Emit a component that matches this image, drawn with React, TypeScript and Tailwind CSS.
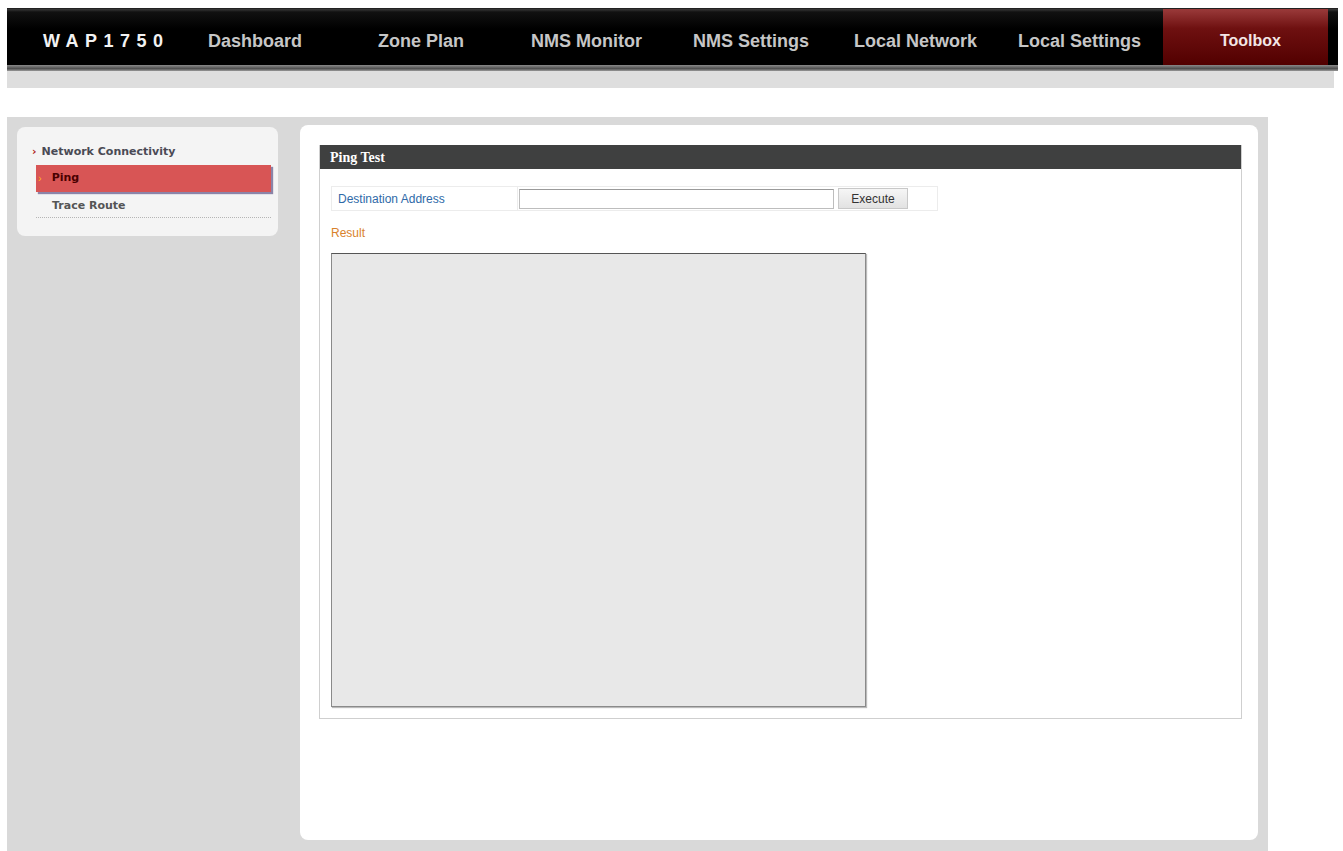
import React from "react";

const navItems = [
  { label: "Dashboard", w: "w-[170px]" },
  { label: "Zone Plan", w: "w-[153px]" },
  { label: "NMS Monitor", w: "w-[162px]" },
  { label: "NMS Settings", w: "w-[161px]" },
  { label: "Local Network", w: "w-[164px]" },
  { label: "Local Settings", w: "w-[145px]" },
];

export default function App() {
  return (
    <div className="min-h-[851px] w-[1343px] bg-white font-['Liberation_Sans',Arial,sans-serif] overflow-hidden">
      {/* Top navigation */}
      <div className="pt-[8px] pl-[7px] w-[1338px]">
        <div className="h-[57px] flex items-stretch bg-[linear-gradient(to_bottom,#3a3a3a_0px,#111_3px,#000_20px,#000_100%)] border-t border-[#222]">
          <div className="w-[201px] flex items-center pl-[36px] pt-[8px]">
            <span className="text-[#f2f2f2] font-bold text-[18px] tracking-[6.5px] leading-none">WAP1750</span>
          </div>
          <div className="flex items-stretch">
            {navItems.map((n) => (
              <div key={n.label} className={`${n.w} flex items-center pt-[8px]`}>
                <span className="text-[#c6c6c6] font-bold text-[18px] leading-none">{n.label}</span>
              </div>
            ))}
          </div>
          <div className="w-[165px] flex items-center justify-center pt-[8px] pl-[10px] bg-[linear-gradient(to_bottom,#9a3a3a_0%,#6e1010_35%,#520000_100%)]">
            <span className="text-[#f3e6e6] font-bold text-[16px] leading-none">Toolbox</span>
          </div>
        </div>
        <div className="h-[6px] bg-[linear-gradient(to_bottom,#8a8a8a,#505050_60%,#999)]" />
        <div className="h-[17px] w-[1327px] bg-[#dedede]" />
      </div>

      {/* Main */}
      <div className="mt-[29px] ml-[7px] w-[1261px] bg-[#d9d9d9] h-[734px] flex pt-[8px] pl-[10px] pr-[10px]">
        {/* Sidebar */}
        <div className="w-[261px] shrink-0 pt-[2px]">
          <div className="h-[109px] rounded-[8px] bg-[#f4f4f4] pt-[18px] pl-[15px] pr-[6px]">
            <div className="flex items-center text-[11px] font-bold text-[#4a4a55] font-['DejaVu_Sans',Verdana,sans-serif] leading-[14px]">
              <span className="text-[#b02020] text-[11px] mr-[5px]">›</span>
              <span>Network Connectivity</span>
            </div>
            <div className="mt-[6px] ml-[4px] h-[27px] bg-[#d85555] shadow-[2px_2px_1px_#8b84a8] flex items-center pl-[2px] w-[235px]">
              <span className="text-[#ffb020] text-[11px] mr-[10px]">›</span>
              <span className="text-[#4a0000] text-[11px] font-bold font-['DejaVu_Sans',Verdana,sans-serif]">Ping</span>
            </div>
            <div className="ml-[4px] w-[235px] pl-[16px] h-[26px] pt-[3px] flex items-center border-b border-dotted border-[#b5b5b5]">
              <span className="text-[#555] text-[11px] font-bold font-['DejaVu_Sans',Verdana,sans-serif]">Trace Route</span>
            </div>
          </div>
        </div>

        {/* Content panel */}
        <div className="ml-[22px] w-[958px] h-[715px] bg-white rounded-[8px] pt-[20px] pl-[19px]">
          <div className="w-[923px] h-[574px] border border-[#cfcfcf] border-t-0">
            <div className="h-[24px] bg-[#3f4040] flex items-center pl-[10px]">
              <span className="text-white text-[14px] font-bold font-['Liberation_Serif','Times_New_Roman',serif]">Ping Test</span>
            </div>
            <div className="pl-[11px] pt-[17px]">
              <div className="flex items-stretch w-[607px] h-[25px] border border-[#ececec]">
                <div className="w-[186px] border-r border-[#ececec] flex items-center pl-[6px]">
                  <span className="text-[#2f6aa8] text-[12px]">Destination Address</span>
                </div>
                <div className="flex items-center pl-[1px]">
                  <div className="w-[315px] h-[20px] border border-[#bdbdbd] border-t-[#9a9a9a] bg-white" />
                  <div className="ml-[4px] w-[70px] h-[21px] border border-[#c8c8c8] bg-[linear-gradient(to_bottom,#f6f6f6,#e2e2e2)] flex items-center justify-center">
                    <span className="text-[#333] text-[12px]">Execute</span>
                  </div>
                </div>
              </div>
              <div className="mt-[15px] text-[#d9822b] text-[12px] leading-[14px]">Result</div>
              <div className="mt-[13px] w-[535px] h-[454px] bg-[#e8e8e8] border border-[#8a8a8a] border-t-[#555] shadow-[1px_1px_1px_#bbb]" />
            </div>
          </div>
        </div>
      </div>
    </div>
  );
}
